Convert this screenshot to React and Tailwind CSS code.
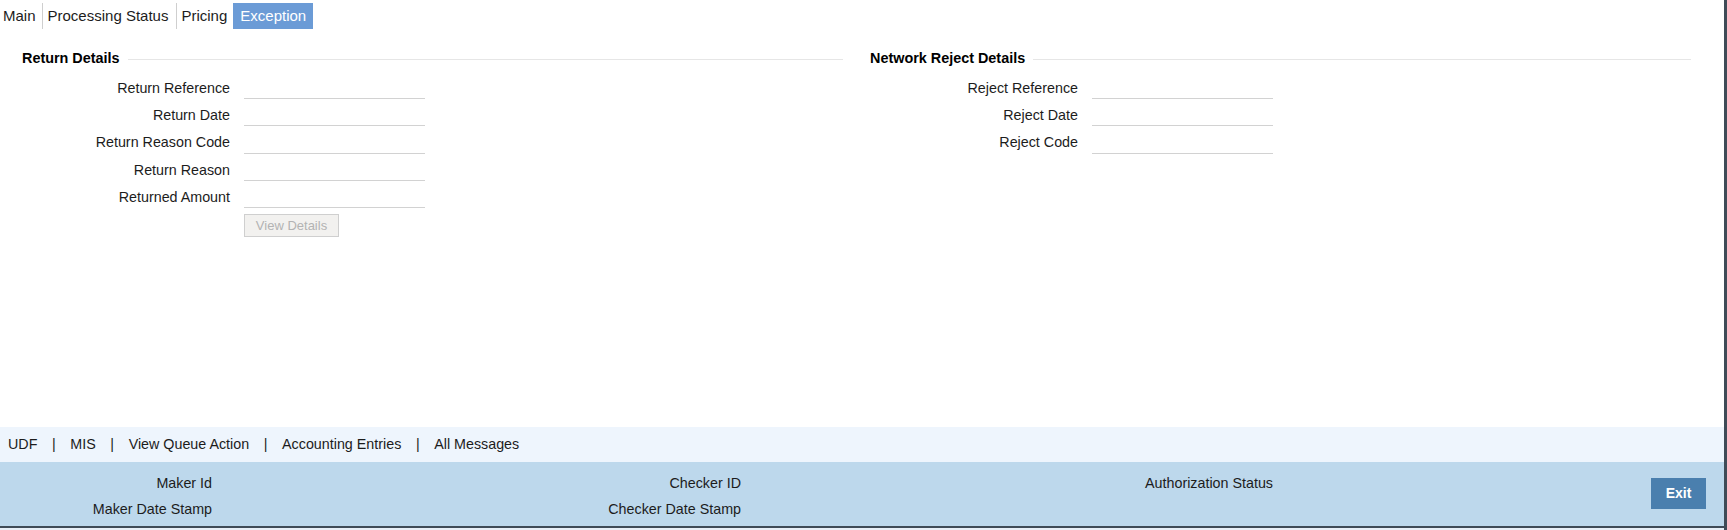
const returnFields = ["Return Reference", "Return Date", "Return Reason Code", "Return Reason", "Returned Amount"];
const rejectFields = ["Reject Reference", "Reject Date", "Reject Code"];
const links = ["UDF", "MIS", "View Queue Action", "Accounting Entries", "All Messages"];

function SectionTitle({ children }) {
  return (
    <div className="flex items-center h-[20px]">
      <span className="font-bold text-[14.4px] text-black whitespace-nowrap">{children}</span>
      <div className="flex-1 h-px bg-[#e6e6e6] ml-[8px]" />
    </div>
  );
}

function Field({ label }) {
  return (
    <div className="flex items-center h-[22px]">
      <div className="w-[208px] text-right text-[14.3px] text-[#1c1c1c] whitespace-nowrap pt-px">{label}</div>
      <div className="ml-[14px] w-[181px] h-[22px] border-b border-[#d2d2d2]" />
    </div>
  );
}

export default function App() {
  return (
    <div
      className="w-full h-[530px] bg-white border-r-[3px] border-[#3f4b57] flex flex-col overflow-hidden"
      style={{ fontFamily: '"Liberation Sans", Arial, sans-serif' }}
    >
      {/* tabs */}
      <div className="flex items-stretch h-[26px] mt-[3px] text-[15px] text-[#1c1c1c]">
        <div className="flex items-center pl-[3px] pr-[6px]">Main</div>
        <div className="flex items-center pl-[5px] pr-[8px] border-l border-[#cfcfcf]">Processing Status</div>
        <div className="flex items-center pl-[4px] pr-[6px] border-l border-[#cfcfcf]">Pricing</div>
        <div className="flex items-center px-[7px] bg-[#6b9bd6] text-white">Exception</div>
      </div>

      {/* details */}
      <div className="grid grid-cols-2 w-[1696px] mt-[20px]">
        <div className="pl-[22px] pr-[5px]">
          <SectionTitle>Return Details</SectionTitle>
          <div className="flex flex-col gap-[5.3px] mt-[8px]">
            {returnFields.map((f) => (
              <Field key={f} label={f} />
            ))}
          </div>
          <div className="ml-[222px] mt-[5px]">
            <button className="w-[95px] h-[23px] bg-[#f2f1ef] border border-[#cfcfcf] text-[13px] text-[#b3b3b3]">
              View Details
            </button>
          </div>
        </div>
        <div className="pl-[22px] pr-[5px]">
          <SectionTitle>Network Reject Details</SectionTitle>
          <div className="flex flex-col gap-[5.3px] mt-[8px]">
            {rejectFields.map((f) => (
              <Field key={f} label={f} />
            ))}
          </div>
        </div>
      </div>

      <div className="flex-1" />

      {/* link bar */}
      <div className="h-[35px] bg-[#eef5fd] flex items-center gap-[14.6px] pl-[8px] text-[14.3px] text-[#1c1c1c]">
        {links.map((l, i) => (
          <div key={l} className="flex items-center gap-[14.6px]">
            {i > 0 && <span>|</span>}
            <span>{l}</span>
          </div>
        ))}
      </div>

      {/* audit bar */}
      <div className="h-[64px] bg-[#bdd8ec] flex items-start text-[14.3px] text-[#1c1c1c]">
        <div className="w-[212px] text-right pt-[8px] leading-[26px]">
          <div>Maker Id</div>
          <div>Maker Date Stamp</div>
        </div>
        <div className="w-[529px] text-right pt-[8px] leading-[26px]">
          <div>Checker ID</div>
          <div>Checker Date Stamp</div>
        </div>
        <div className="w-[532px] text-right pt-[8px] leading-[26px]">
          <div>Authorization Status</div>
        </div>
        <button className="ml-auto mr-[18px] mt-[16px] w-[55px] h-[31px] bg-[#4a7fae] text-white font-bold text-[14px]">
          Exit
        </button>
      </div>
      <div className="h-[2px] bg-[#3f4b57]" />
      <div className="h-[2px] bg-[#e8eff7]" />
    </div>
  );
}
